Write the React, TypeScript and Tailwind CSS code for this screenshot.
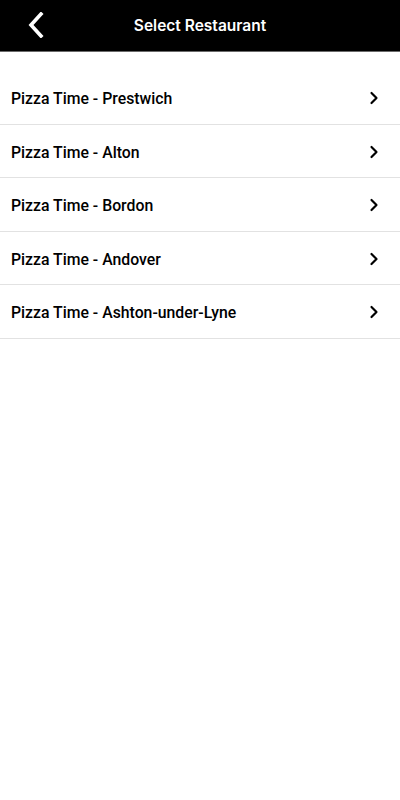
import { ChevronRight } from "lucide-react";

const restaurants = [
  "Pizza Time - Prestwich",
  "Pizza Time - Alton",
  "Pizza Time - Bordon",
  "Pizza Time - Andover",
  "Pizza Time - Ashton-under-Lyne",
];

function BackIcon() {
  return (
    <svg width="18" height="26" viewBox="0 0 18 26" fill="none">
      <path d="M14 2 L4 13 L14 24" stroke="white" strokeWidth="3.6" strokeLinecap="square" strokeLinejoin="miter" />
    </svg>
  );
}

export default function App() {
  return (
    <div className="min-h-[800px] w-[400px] bg-white font-['Roboto',sans-serif]">
      <div className="relative flex h-[52px] items-center justify-center border-b border-[#6b6b6b] bg-black">
        <button className="absolute left-[27px] top-[12px]">
          <BackIcon />
        </button>
        <h1 className="font-['Inter',sans-serif] text-[15.5px] font-semibold text-white">Select Restaurant</h1>
      </div>
      <div className="pt-[19px]">
        {restaurants.map((name) => (
          <div
            key={name}
            className="flex h-[53.5px] items-center justify-between border-b-[1.5px] border-[#e2e2e2] pl-[11px] pr-[16px]"
          >
            <span className="pt-[4px] text-[15.8px] font-medium text-black">{name}</span>
            <ChevronRight size={20} strokeWidth={2.6} className="mt-[2px] text-black" />
          </div>
        ))}
      </div>
    </div>
  );
}
